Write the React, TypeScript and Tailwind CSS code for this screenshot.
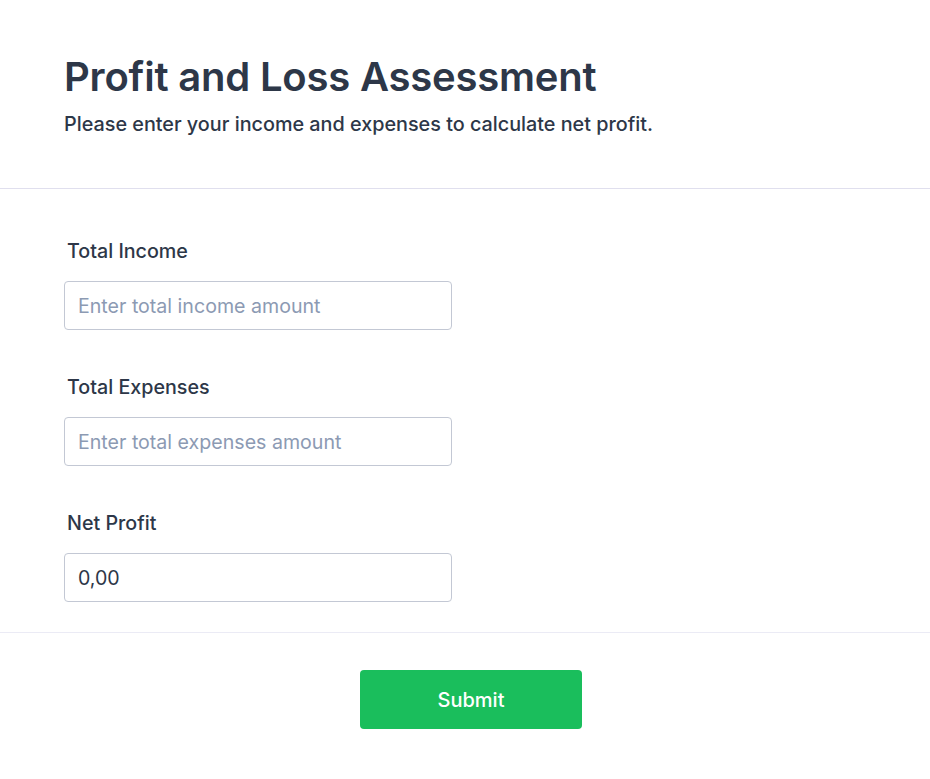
import React from 'react';

const Field: React.FC<{ label: string; placeholder?: string; value?: string }> = ({ label, placeholder, value }) => (
  <div className="flex flex-col">
    <label className="pl-[3px] text-[19.7px] leading-[28px] font-medium text-[#2d3748]">{label}</label>
    <input
      type="text"
      placeholder={placeholder}
      defaultValue={value}
      className="mt-[16px] h-[49px] w-[388px] rounded-[4px] border border-[#c3c8d4] bg-white px-[13px] text-[19.6px] font-normal text-[#2d3748] placeholder:text-[#8c9ab3] focus:outline-none"
    />
  </div>
);

export default function App() {
  return (
    <div className="min-h-[779px] w-full bg-white" style={{ fontFamily: 'Inter, "Noto Sans", sans-serif' }}>
      <header className="px-16 pt-[54px] pb-[50px] border-b border-[#e0dfee]">
        <h1 className="text-[40px] leading-[46px] font-semibold text-[#2d3748] tracking-[-0.2px]">
          Profit and Loss Assessment
        </h1>
        <p className="mt-[10px] text-[19.8px] leading-[28px] font-medium text-[#2d3748]">
          Please enter your income and expenses to calculate net profit.
        </p>
      </header>

      <form className="px-16 pt-[48px] pb-[30px] border-b border-[#ebebf5] flex flex-col gap-[43px]">
        <Field label="Total Income" placeholder="Enter total income amount" />
        <Field label="Total Expenses" placeholder="Enter total expenses amount" />
        <Field label="Net Profit" value="0,00" />
      </form>

      <div className="flex justify-center pt-[37px] pl-[12px]">
        <button className="h-[59px] w-[222px] rounded-[4px] bg-[#1abe5c] text-[20px] font-medium text-white">
          Submit
        </button>
      </div>
    </div>
  );
}
